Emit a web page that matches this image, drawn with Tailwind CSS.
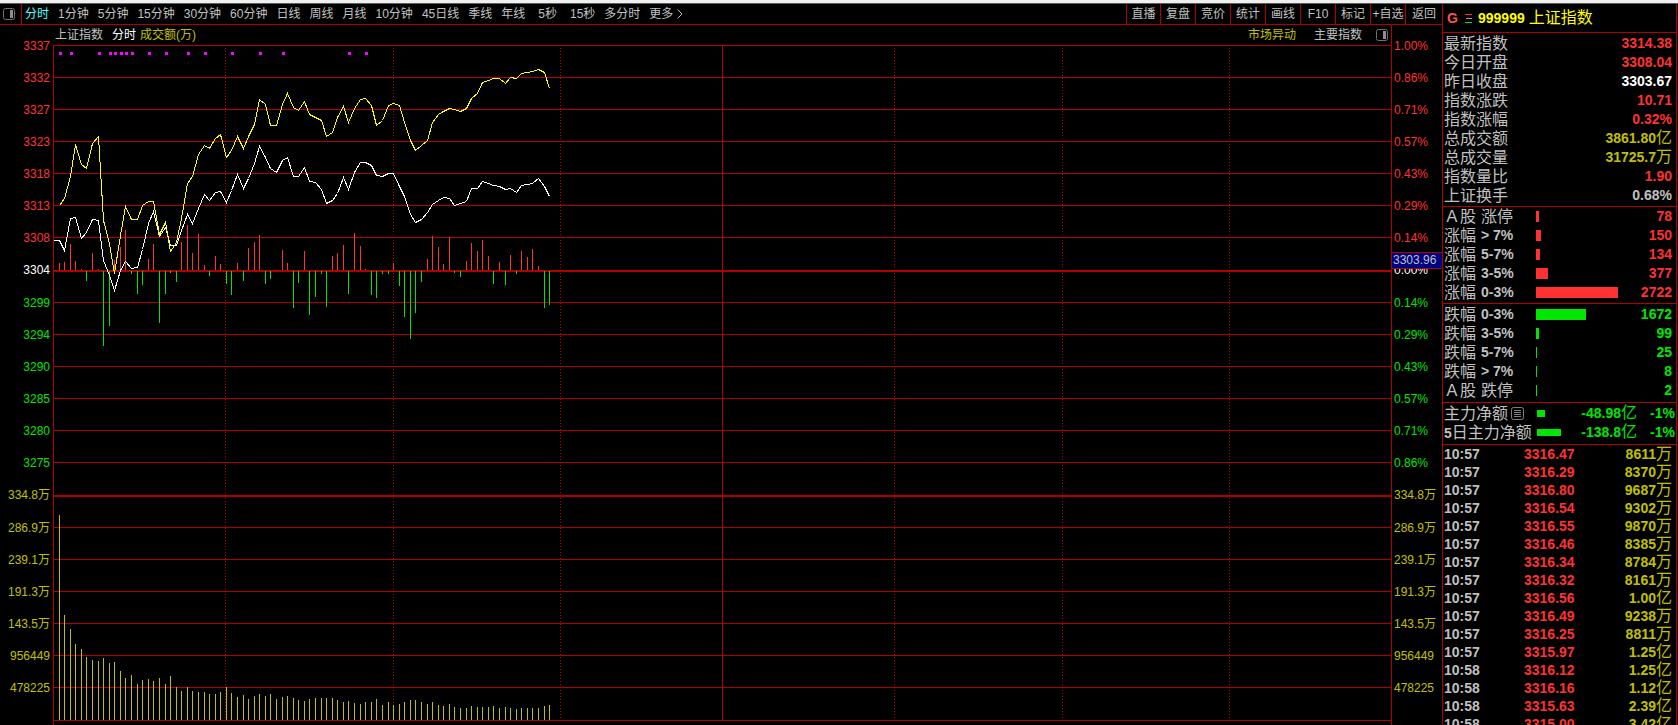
<!DOCTYPE html>
<html lang="zh-CN">
<head>
  <meta charset="UTF-8">
  <meta name="viewport" content="width=device-width, initial-scale=1">
  <title>上证指数 分时</title>
  <script src="https://cdn.jsdelivr.net/npm/@tailwindcss/browser@4"></script>
</head>
<body class="flex h-screen flex-col overflow-hidden bg-black font-['Liberation_Sans','Noto_Sans_CJK_SC',sans-serif] text-[12px] text-[#c0c0c0]">
  <!-- Window edge -->
  <div class="h-1 shrink-0 border-b border-[#606060] bg-[#f0f0f0]"></div>

  <div class="flex min-h-0 flex-1">
    <main class="flex min-w-0 flex-1 flex-col">
      <!-- Period tabs and tools -->
      <nav class="flex h-[21px] shrink-0 items-stretch justify-between border-b border-[#b00000] leading-[20px] whitespace-nowrap">
        <div class="flex">
          <button aria-label="侧栏" class="flex w-[22px] items-center border-r border-[#b00000] pl-[3px]">
            <svg width="12" height="12" viewBox="0 0 12 12"><rect x="0.5" y="0.5" width="11" height="11" rx="2" fill="none" stroke="#707070"/><rect x="7" y="2" width="3" height="8" fill="#909090"/></svg>
          </button>
          <div class="flex gap-[9px] pl-[3px]">
            <button class="text-[#54ffff]">分时</button>
            <button>1分钟</button>
            <button>5分钟</button>
            <button>15分钟</button>
            <button>30分钟</button>
            <button>60分钟</button>
            <button>日线</button>
            <button>周线</button>
            <button>月线</button>
            <button>10分钟</button>
            <button>45日线</button>
            <button>季线</button>
            <button>年线</button>
            <button class="pl-1">5秒</button>
            <button class="pl-1">15秒</button>
            <button>多分时</button>
            <button class="flex items-center gap-1">更多
              <svg width="6" height="10" viewBox="0 0 6 10" fill="none" stroke="#c0c0c0"><path d="M0.5 0.5 5 5 0.5 9.5"/></svg>
            </button>
          </div>
        </div>
        <div class="flex">
          <button class="w-[34px] border-l border-[#b00000]">直播</button>
          <button class="w-[35px] border-l border-[#b00000]">复盘</button>
          <button class="w-[35px] border-l border-[#b00000]">竞价</button>
          <button class="w-[35px] border-l border-[#b00000]">统计</button>
          <button class="w-[35px] border-l border-[#b00000]">画线</button>
          <button class="w-[35px] border-l border-[#b00000]">F10</button>
          <button class="w-[35px] border-l border-[#b00000]">标记</button>
          <button class="w-[35px] border-l border-[#b00000]">+自选</button>
          <button class="w-[37px] border-l border-[#b00000]">返回</button>
        </div>
      </nav>

      <div class="flex min-h-0 flex-1">
        <div id="axisLeft" class="w-[53px] shrink-0 pt-[5px] pr-[3px] text-right"></div>

        <section class="min-w-0 flex-1 border-r border-[#b00000]">
          <div class="flex h-5 items-center justify-between pr-[3px] pl-0.5 leading-[20px]">
            <div class="flex">
              <span>上证指数</span>
              <span class="ml-[9px] text-white">分时</span>
              <span class="ml-1 text-[#c0c000]">成交额(万)</span>
            </div>
            <div class="flex items-center">
              <button class="text-[#c0c000]">市场异动</button>
              <button class="ml-[18px]">主要指数</button>
              <button aria-label="展开" class="ml-[14px]">
                <svg width="12" height="12" viewBox="0 0 12 12"><rect x="0.5" y="0.5" width="11" height="11" rx="2" fill="none" stroke="#707070"/><rect x="7" y="2" width="3" height="8" fill="#909090"/></svg>
              </button>
            </div>
          </div>
          <svg id="chart" class="block h-[680px] w-full" viewBox="0 0 1338 680" preserveAspectRatio="none" shape-rendering="crispEdges"></svg>
        </section>

        <div class="relative w-[50px] shrink-0">
          <div id="axisRight" class="pt-[5px] pl-0.5"></div>
          <!-- Crosshair price tag -->
          <div class="absolute top-[227px] left-0 h-[17px] w-full border-y border-[#b00000] bg-[#000080] pl-px leading-[15px]">3303.96</div>
        </div>
      </div>
    </main>

    <!-- Quote panel -->
    <aside class="mr-px flex w-[235px] shrink-0 flex-col border-x border-[#b00000] text-[14px] font-bold">
      <header class="flex h-[29px] shrink-0 items-center border-b border-[#b00000] pl-1 text-[#ffff00]">
        <span class="w-[18px] text-[#ff5050]">G</span>
        <svg width="7" height="9" viewBox="0 0 7 9" shape-rendering="crispEdges"><path d="M0 0.5H7" stroke="#ff3232"/><path d="M1 4.5H7" stroke="#a0a0a0"/><path d="M0 8.5H7" stroke="#00e600"/></svg>
        <span class="ml-1.5">999999</span>
        <h1 class="ml-1 text-[16px] font-normal">上证指数</h1>
      </header>
      <table class="w-full border-collapse">
        <tbody id="quotes"></tbody>
      </table>
      <div id="breadth" class="shrink-0 border-t border-[#b00000]"></div>
      <ul id="ticks" class="min-h-0 flex-1 overflow-hidden border-t border-[#b00000] leading-[18px]"></ul>
    </aside>
  </div>

  <script>
    var RED = '#ff3232', GREEN = '#00e600', GRID = '#b00000', GOLD = '#c0c000';
    // Makes the CJK unit after a number regular weight at 16px
    function num(s) {
      return s.replace(/[万亿]/, '<span class="text-[16px] leading-none font-normal">$&</span>');
    }

    // Axis labels
    var prices = [3337, 3332, 3327, 3323, 3318, 3313, 3308, 3304, 3299, 3294, 3290, 3285, 3280, 3275];
    var percents = ['1.00', '0.86', '0.71', '0.57', '0.43', '0.29', '0.14', '0.00', '0.14', '0.29', '0.43', '0.57', '0.71', '0.86'];
    var volumes = ['334.8万', '286.9万', '239.1万', '191.3万', '143.5万', '956449', '478225'];
    function axis(id, top) {
      var html = top.map(function (t, i) {
        var c = i < 7 ? 'text-[#ff3232]' : i > 7 ? 'text-[#00e600]' : 'text-white';
        var h = i == 7 ? 'h-[33px] leading-[33px]' : 'h-8 leading-8';
        return '<div class="' + c + ' ' + h + '">' + t + '</div>';
      }).join('');
      html += volumes.map(function (t, i) {
        var h = i == 0 ? 'h-[33px] leading-[33px]' : 'h-8 leading-8';
        return '<div class="text-[#c0c000] ' + h + '">' + t + '</div>';
      }).join('');
      document.getElementById(id).innerHTML = html;
    }
    axis('axisLeft', prices);
    axis('axisRight', percents.map(function (p) { return p + '%'; }));

    // Chart data, one value per minute
    var average = [205,198,176,144,164,168,143,136,220,243,273,235,206,219,219,205,201,201,234,222,251,242,218,183,176,154,145,148,138,134,157,150,136,148,136,124,99,104,125,125,104,93,107,110,101,114,117,120,136,132,117,106,122,108,99,98,105,125,120,105,103,105,122,140,150,145,140,122,114,111,108,109,111,108,98,93,82,80,78,78,83,77,78,73,72,71,69,72,88];
    var index = [240,240,250,218,217,238,232,219,220,260,275,290,270,261,268,267,249,223,211,236,227,245,245,230,214,223,208,194,200,192,191,202,190,174,188,178,163,146,157,168,172,160,157,176,176,167,181,182,189,203,200,193,177,189,172,162,162,165,175,176,173,173,186,196,214,222,219,212,204,200,197,198,205,203,201,188,188,181,183,185,186,189,188,192,185,184,183,178,186,196];
    var momentum = [7,8,26,9,1,-10,17,1,-75,-55,10,23,40,-3,-23,-14,11,26,-52,-23,-2,-11,28,45,17,36,5,-5,14,6,-13,-24,7,-10,22,28,35,-13,-8,0,20,7,-37,-12,19,-44,-26,-3,-36,14,17,25,-23,37,24,1,-24,-27,-3,-3,7,-15,-46,-68,-42,-11,11,34,23,6,33,-2,-6,9,27,19,30,14,-13,8,-14,15,-3,19,13,21,4,-37,-34];
    var turnover = [205,105,91,76,71,63,60,59,62,57,58,49,42,45,36,40,41,39,42,36,44,33,29,33,29,28,28,26,26,28,33,27,23,25,21,24,26,24,26,21,23,24,22,20,19,21,22,22,22,22,20,18,19,17,16,18,18,21,15,18,15,16,18,20,20,18,16,18,15,14,16,13,12,12,14,13,13,13,14,12,13,12,11,12,12,12,12,14,15];
    var alerts = [1, 3, 8, 10, 11, 12, 13, 14, 17, 20, 24, 27, 32, 37, 41, 53, 56];

    function px(i) { return Math.round(i * 5.575); }
    function rect(x, y, w, h, c) {
      return '<rect x="' + x + '" y="' + y + '" width="' + w + '" height="' + h + '" fill="' + c + '"/>';
    }
    // Values are measured from the window top, the plot starts 45 below it
    function line(data, from, c) {
      var pts = data.map(function (v, i) { return (px(i + from) + 0.5) + ',' + (v - 44.5); });
      return '<polyline points="' + pts.join(' ') + '" fill="none" stroke="' + c + '"/>';
    }

    var svg = '';
    for (var i = 0; i < 14; i++) {
      if (i != 7) svg += rect(0, i * 32 + (i > 7 ? 1 : 0), 1338, 1, GRID);
    }
    svg += rect(0, 225, 1338, 2, GRID) + rect(0, 450, 1338, 2, GRID);
    for (i = 1; i < 7; i++) svg += rect(0, 450 + i * 32, 1338, 1, GRID);
    svg += rect(0, 675, 1338, 1, GRID) + rect(0, 0, 1, 680, GRID) + rect(669, 0, 1, 675, GRID);
    [172, 340, 507, 841, 1009, 1176].forEach(function (x) {
      svg += '<path d="M' + (x + 0.5) + ' 3V675" stroke="' + GRID + '" stroke-dasharray="1 2"/>';
    });
    momentum.forEach(function (m, i) {
      svg += m > 0 ? rect(px(i + 1), 225 - m, 1, m, RED) : rect(px(i + 1), 226, 1, -m, GREEN);
    });
    turnover.forEach(function (t, i) { svg += rect(px(i + 1), 675 - t, 1, t, GOLD); });
    alerts.forEach(function (a) { svg += rect(px(a), 7, 3, 3, '#ff00ff'); });
    svg += line(index, 0, '#ffffff') + line(average, 1, '#ffff00');
    document.getElementById('chart').innerHTML = svg;

    // Quote rows
    var quotes = [
      ['最新指数', '3314.38', 'text-[#ff3232]'],
      ['今日开盘', '3308.04', 'text-[#ff3232]'],
      ['昨日收盘', '3303.67', 'text-white'],
      ['指数涨跌', '10.71', 'text-[#ff3232]'],
      ['指数涨幅', '0.32%', 'text-[#ff3232]'],
      ['总成交额', '3861.80亿', 'text-[#c0c000]'],
      ['总成交量', '31725.7万', 'text-[#c0c000]'],
      ['指数量比', '1.90', 'text-[#ff3232]'],
      ['上证换手', '0.68%', 'text-[#c0c0c0]']
    ];
    document.getElementById('quotes').innerHTML = '<tr class="h-px"></tr>' + quotes.map(function (q) {
      return '<tr class="h-[19px] leading-[19px]"><th class="p-0 pl-px text-left text-[16px] font-normal">' + q[0] +
        '</th><td class="p-0 pr-1 text-right ' + q[2] + '">' + num(q[1]) + '</td></tr>';
    }).join('') + '<tr class="h-px"></tr>';

    // Advance / decline distribution
    var up = [['Ａ股', '涨停', 78, 3], ['涨幅', '> 7%', 150, 5], ['涨幅', '5-7%', 134, 4], ['涨幅', '3-5%', 377, 12], ['涨幅', '0-3%', 2722, 82]];
    var down = [['跌幅', '0-3%', 1672, 50], ['跌幅', '3-5%', 99, 3], ['跌幅', '5-7%', 25, 1], ['跌幅', '> 7%', 8, 1], ['Ａ股', '跌停', 2, 1]];
    function dist(rows, text, bar) {
      return rows.map(function (r) {
        var cls = /停/.test(r[1]) ? 'text-[16px] font-normal' : '';
        return '<div class="flex h-[19px] items-center pr-1 pl-px leading-[19px]"><div class="flex w-[92px] gap-[5px]"><span class="text-[16px] font-normal">' + r[0] +
          '</span><span class="' + cls + '">' + r[1] + '</span></div><div class="h-[11px] ' + bar + '" style="width:' + r[3] +
          'px"></div><span class="ml-auto ' + text + '">' + r[2] + '</span></div>';
      }).join('');
    }
    var note = '<svg width="13" height="13" viewBox="0 0 13 13" fill="none" stroke="#808080"><rect x="0.5" y="0.5" width="12" height="12" rx="2"/><path d="M3 3.5H10M3 5.5H10M3 7.5H10M3 9.5H10"/></svg>';
    function flow(label, icon, w, v) {
      return '<div class="flex h-[19px] items-center pr-px pl-px leading-[19px]"><div class="flex w-[93px] items-center gap-[3px] whitespace-nowrap"><span class="text-[16px] font-normal">' + label + '</span>' + icon +
        '</div><div class="h-[7px] bg-[#00e600]" style="width:' + w + 'px"></div><span class="ml-auto text-[#00e600]">' + num(v) +
        '</span><span class="w-[38px] text-right text-[#00e600]">-1%</span></div>';
    }
    document.getElementById('breadth').innerHTML =
      '<div class="pb-px">' + dist(up, 'text-[#ff3232]', 'bg-[#ff3232]') + '</div>' +
      '<div class="border-t border-[#b00000] pt-px pb-0.5">' + dist(down, 'text-[#00e600]', 'bg-[#00e600]') + '</div>' +
      '<div class="border-t border-[#b00000] pt-px pb-0.5">' + flow('主力净额', note, 8, '-48.98亿') +
      flow('<b class="text-[14px]">5</b>日主力净额', '', 24, '-138.8亿') + '</div>';

    // Tick list
    var ticks = [
      ['10:57', '3316.47', '8611万'], ['10:57', '3316.29', '8370万'], ['10:57', '3316.80', '9687万'], ['10:57', '3316.54', '9302万'],
      ['10:57', '3316.55', '9870万'], ['10:57', '3316.46', '8385万'], ['10:57', '3316.34', '8784万'], ['10:57', '3316.32', '8161万'],
      ['10:57', '3316.56', '1.00亿'], ['10:57', '3316.49', '9238万'], ['10:57', '3316.25', '8811万'], ['10:57', '3315.97', '1.25亿'],
      ['10:58', '3316.12', '1.25亿'], ['10:58', '3316.16', '1.12亿'], ['10:58', '3315.63', '2.39亿'], ['10:58', '3315.00', '3.42亿']
    ];
    document.getElementById('ticks').innerHTML = ticks.map(function (t) {
      return '<li class="flex h-[18px] pr-1 pl-px"><span class="w-[80px]">' + t[0] + '</span><span class="text-[#ff3232]">' + t[1] +
        '</span><span class="ml-auto text-[#c0c000]">' + num(t[2]) + '</span></li>';
    }).join('');
  </script>
</body>
</html>
